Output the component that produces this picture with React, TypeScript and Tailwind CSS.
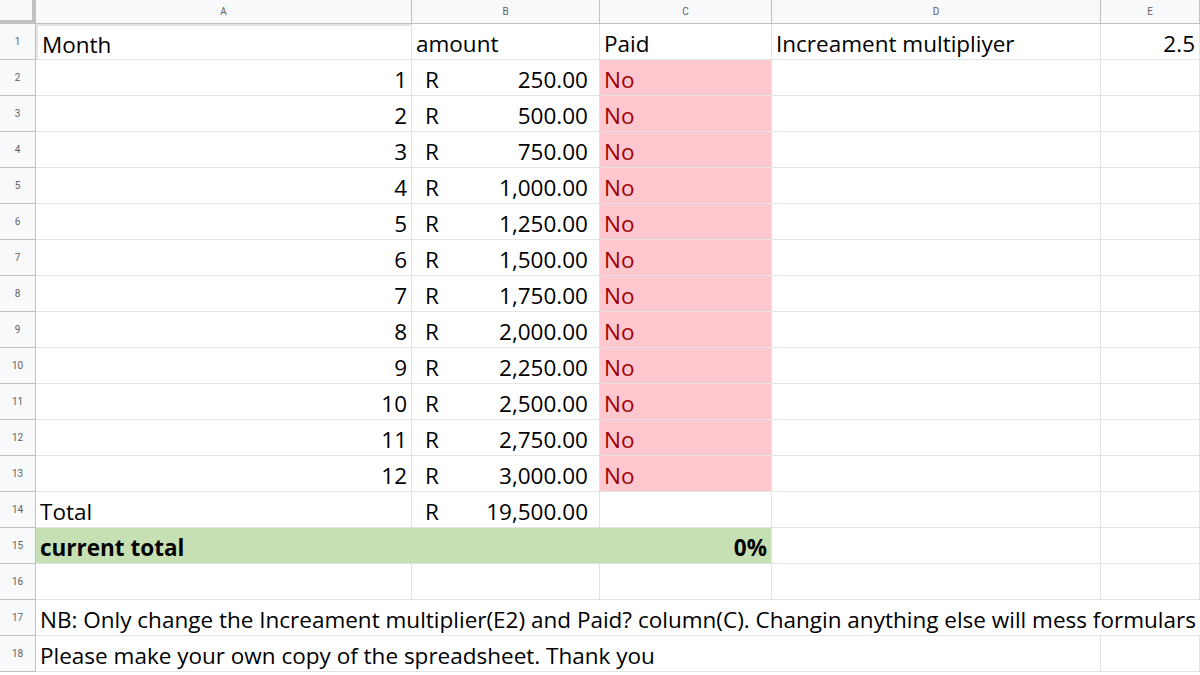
const amounts = ["250.00", "500.00", "750.00", "1,000.00", "1,250.00", "1,500.00", "1,750.00", "2,000.00", "2,250.00", "2,500.00", "2,750.00", "3,000.00"];

const cell = "border-r border-b border-[#e2e3e3] h-[36px] flex items-center px-[4px] pt-[5px] whitespace-nowrap overflow-visible";
const rowHead = "border-r border-b border-[#c0c0c0] bg-[#f8f9fa] h-[36px] flex items-center justify-center text-[10px] text-[#5f6368]";

function RowNum({ n }: { n: number }) {
  return <div className={rowHead} style={{ fontFamily: "Roboto, sans-serif" }}>{n}</div>;
}

export default function App() {
  return (
    <div className="w-[1200px] h-[675px] overflow-hidden bg-white text-[22.5px] text-black" style={{ fontFamily: "'Open Sans', sans-serif" }}>
      <div className="grid grid-cols-[36px_376px_188px_172px_329px_99px]">
        <div className="h-[24px] bg-[#f8f9fa] border-r-4 border-b-4 border-[#c0c0c0]" />
        {["A", "B", "C", "D", "E"].map((c) => (
          <div key={c} className="h-[24px] bg-[#f8f9fa] border-r border-b border-[#c0c0c0] flex items-center justify-center text-[10px] text-[#5f6368]" style={{ fontFamily: "Roboto, sans-serif" }}>{c}</div>
        ))}

        <RowNum n={1} />
        <div className={cell + " border-2 border-[#1a73e8]"}>Month</div>
        <div className={cell}>amount</div>
        <div className={cell}>Paid</div>
        <div className={cell}>Increament multipliyer</div>
        <div className={cell + " justify-end"}>2.5</div>

        {amounts.map((a, i) => (
          <div key={a} className="contents">
            <RowNum n={i + 2} />
            <div className={cell + " justify-end"}>{i + 1}</div>
            <div className={cell + " justify-between pr-[11px]"}><span className="pl-[9px]">R</span><span>{a}</span></div>
            <div className={cell + " bg-[#ffc7ce] text-[#9c0006]"}>No</div>
            <div className={cell} />
            <div className={cell} />
          </div>
        ))}

        <RowNum n={14} />
        <div className={cell}>Total</div>
        <div className={cell + " justify-between pr-[11px]"}><span className="pl-[9px]">R</span><span>19,500.00</span></div>
        <div className={cell} />
        <div className={cell} />
        <div className={cell} />

        <RowNum n={15} />
        <div className={cell + " col-span-3 justify-between bg-[#c6e0b4] font-bold"}><span>current total</span><span>0%</span></div>
        <div className={cell} />
        <div className={cell} />

        <RowNum n={16} />
        <div className={cell} />
        <div className={cell} />
        <div className={cell} />
        <div className={cell} />
        <div className={cell} />

        <RowNum n={17} />
        <div className={cell + " col-span-5 border-r-0"}>NB: Only change the Increament multiplier(E2) and Paid? column(C). Changin anything else will mess formulars</div>

        <RowNum n={18} />
        <div className={cell + " col-span-4"}>Please make your own copy of the spreadsheet. Thank you</div>
        <div className={cell} />
      </div>
    </div>
  );
}
